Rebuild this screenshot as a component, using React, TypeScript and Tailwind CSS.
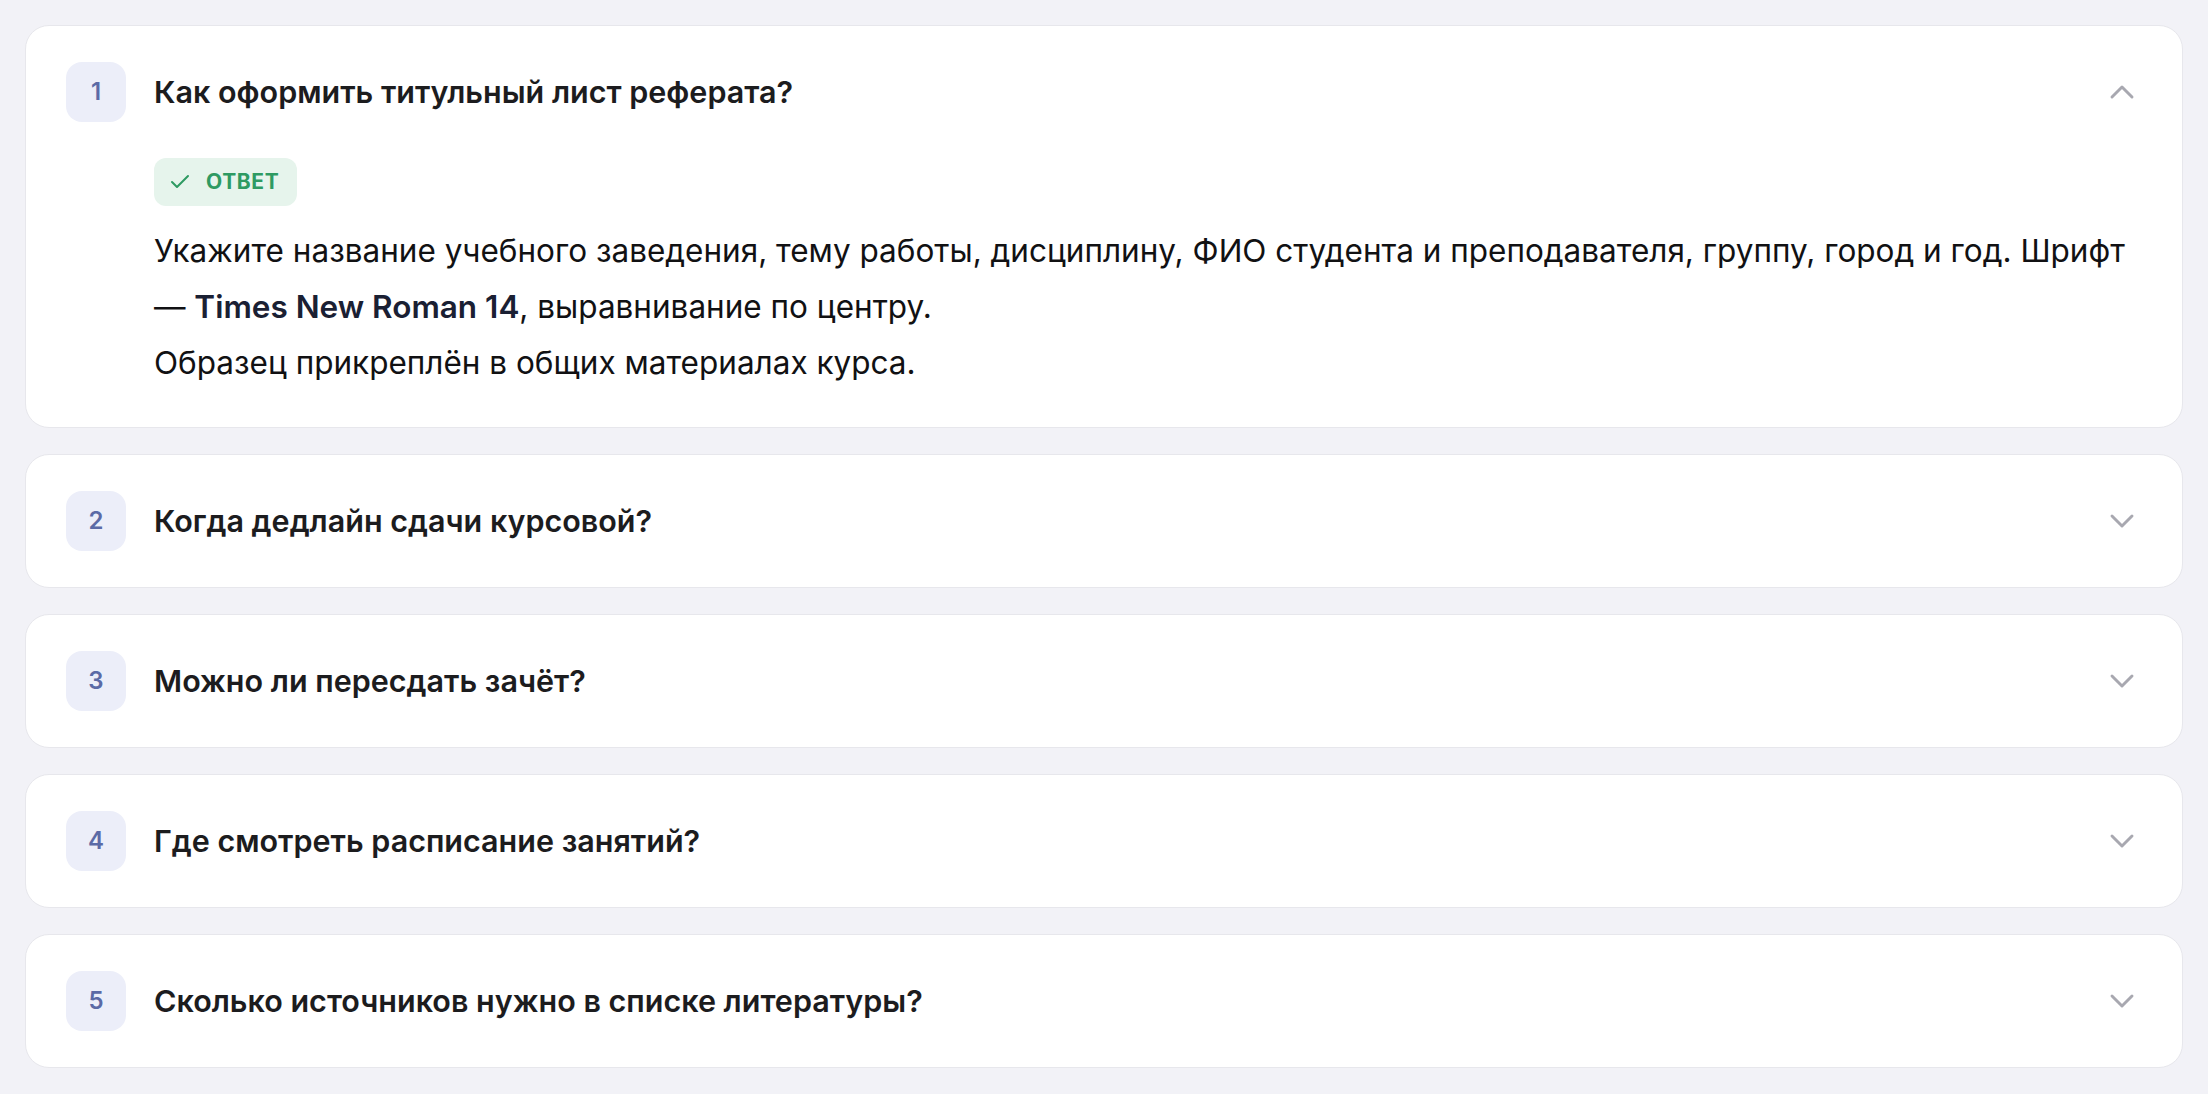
import { ChevronDown, ChevronUp, Check } from 'lucide-react';

interface FaqItem {
  id: number;
  question: string;
}

const items: FaqItem[] = [
  { id: 1, question: 'Как оформить титульный лист реферата?' },
  { id: 2, question: 'Когда дедлайн сдачи курсовой?' },
  { id: 3, question: 'Можно ли пересдать зачёт?' },
  { id: 4, question: 'Где смотреть расписание занятий?' },
  { id: 5, question: 'Сколько источников нужно в списке литературы?' },
];

export default function App() {
  const openId = 1;

  return (
    <main
      className="min-h-screen bg-[#f2f2f7] p-[25px] flex flex-col gap-[26px]"
      style={{ fontFamily: 'Inter, "Noto Sans", sans-serif' }}
    >
      {items.map((item) => {
        const open = item.id === openId;
        return (
          <div
            key={item.id}
            className="rounded-[24px] border border-[#e7e7ec] bg-white px-[40px] py-[36px]"
          >
            <div className="flex items-center gap-[28px]">
              <div className="w-[60px] h-[60px] shrink-0 rounded-[16px] bg-[#eceef9] text-[#5b6aa6] text-[24px] font-semibold flex items-center justify-center">
                {item.id}
              </div>
              <h3 className="flex-1 text-[30.5px] leading-[40px] font-semibold text-[#1c1c1e]">
                {item.question}
              </h3>
              {open ? (
                <ChevronUp size={40} strokeWidth={1.75} className="text-[#a8a8b0] shrink-0" />
              ) : (
                <ChevronDown size={40} strokeWidth={1.75} className="text-[#a8a8b0] shrink-0" />
              )}
            </div>

            {open && (
              <div className="pl-[88px] pt-[36px]">
                <span className="inline-flex items-center gap-[14px] h-[48px] pl-[14px] pr-[18px] rounded-[12px] bg-[#e6f4ec] text-[#2e9a62]">
                  <Check size={24} strokeWidth={2} />
                  <span className="text-[21px] font-bold tracking-[0.03em]">ОТВЕТ</span>
                </span>
                <div className="mt-[17px] text-[31.5px] leading-[56px] text-[#111113]">
                  <p>
                    Укажите название учебного заведения, тему работы, дисциплину, ФИО студента и
                    преподавателя, группу, город и год. Шрифт —{' '}
                    <strong className="font-semibold text-[#1a2033]">Times New Roman 14</strong>,
                    выравнивание по центру.
                  </p>
                  <p>Образец прикреплён в общих материалах курса.</p>
                </div>
              </div>
            )}
          </div>
        );
      })}
    </main>
  );
}
